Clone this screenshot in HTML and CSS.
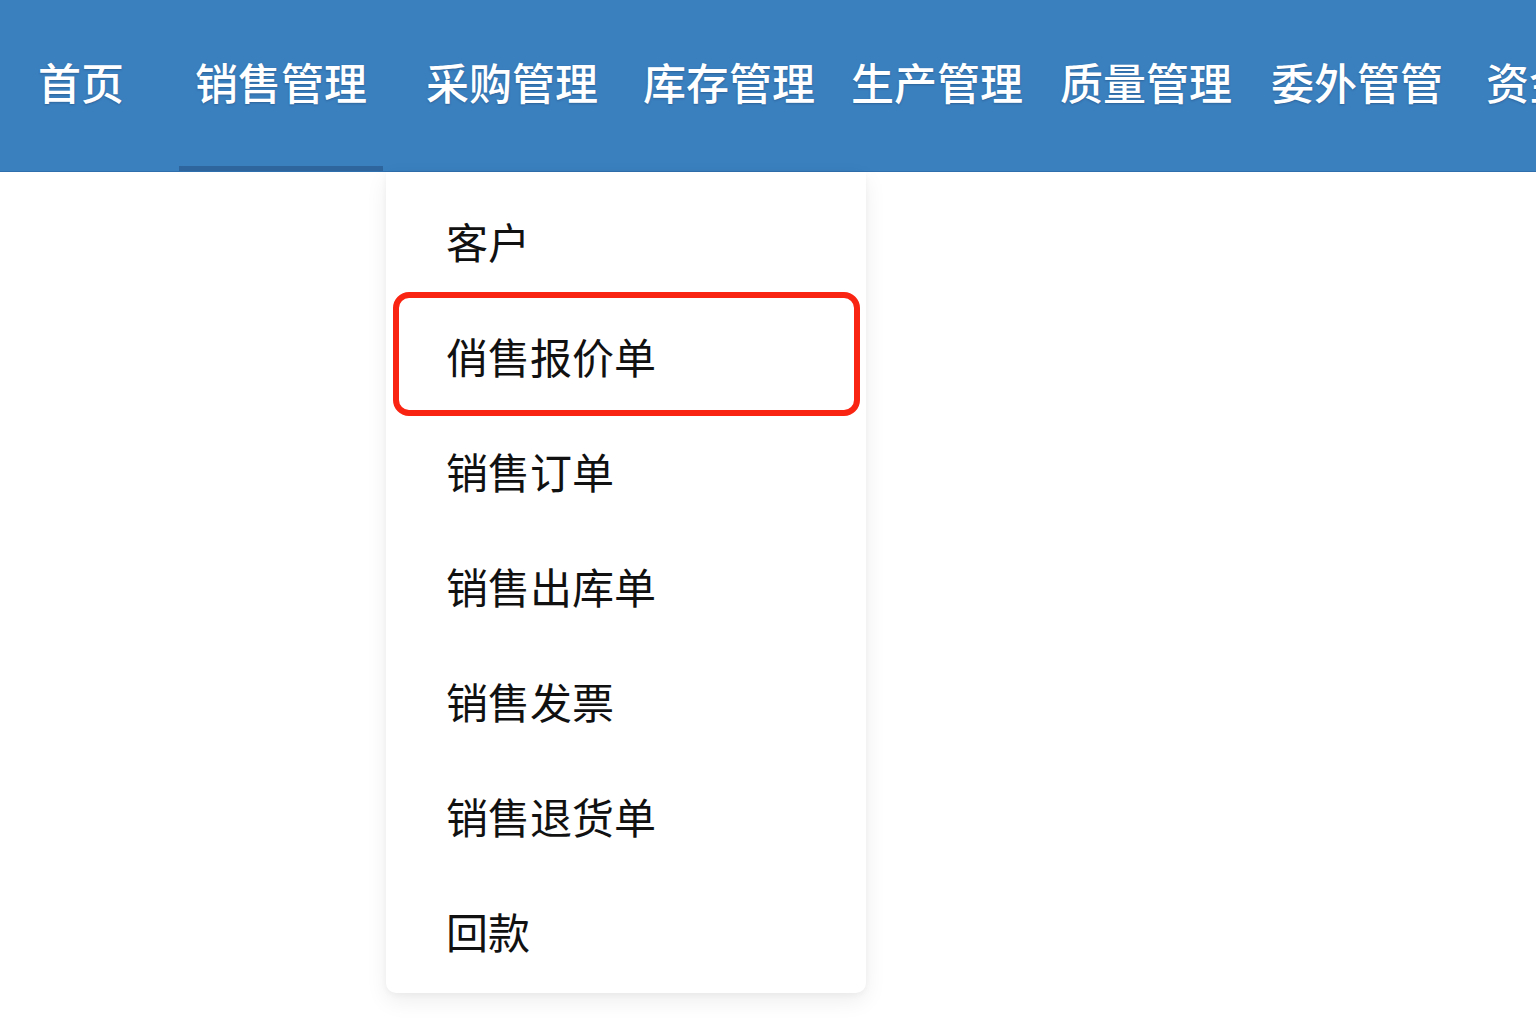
FILE: index.html
```html
<!DOCTYPE html>
<html lang="zh-CN">
<head>
<meta charset="utf-8">
<title>销售管理</title>
<link rel="stylesheet" href="styles.css">
</head>
<body>
<header class="topbar">
  <nav class="nav">
    <a class="nav-item">首页</a>
    <a class="nav-item active">销售管理</a>
    <a class="nav-item">采购管理</a>
    <a class="nav-item">库存管理</a>
    <a class="nav-item">生产管理</a>
    <a class="nav-item">质量管理</a>
    <a class="nav-item">委外管管</a>
    <a class="nav-item">资金管理</a>
  </nav>
</header>
<ul class="dropdown">
  <li class="menu-item">客户</li>
  <li class="menu-item highlighted">俏售报价单</li>
  <li class="menu-item">销售订单</li>
  <li class="menu-item">销售出库单</li>
  <li class="menu-item">销售发票</li>
  <li class="menu-item">销售退货单</li>
  <li class="menu-item">回款</li>
</ul>
</body>
</html>
```
FILE: styles.css
```css
html, body {
  margin: 0;
  padding: 0;
  background: #ffffff;
  width: 1536px;
  height: 1024px;
  overflow: hidden;
  font-family: "Noto Sans CJK SC", "Noto Sans", sans-serif;
}

.topbar {
  height: 171px;
  background: #3a7fbe;
  border-bottom: 1px solid #2f6fae;
  overflow: hidden;
}

.nav {
  display: flex;
  align-items: stretch;
  height: 171px;
  padding-left: 22px;
  white-space: nowrap;
}

.nav-item {
  display: block;
  box-sizing: border-box;
  height: 171px;
  padding: 56px 16px 0;
  font-size: 43px;
  line-height: 50px;
  font-weight: 500;
  color: #ffffff;
  text-shadow: 0 1px 2px rgba(20, 50, 90, 0.35);
  border-bottom: 5px solid transparent;
  flex-shrink: 0;
}

.nav-item:nth-child(2) { margin-left: 39px; }
.nav-item:nth-child(3) { margin-left: 27px; }
.nav-item:nth-child(4) { margin-left: 13px; }
.nav-item:nth-child(5) { margin-left: 4px; }
.nav-item:nth-child(6) { margin-left: 5px; }
.nav-item:nth-child(7) { margin-left: 7px; }
.nav-item:nth-child(8) { margin-left: 11px; }

.nav-item.active {
  border-bottom-color: #2d659c;
}

.dropdown {
  position: absolute;
  left: 386px;
  top: 172px;
  width: 480px;
  margin: 0;
  padding: 11px 0 5px;
  list-style: none;
  background: #ffffff;
  border-radius: 0 0 10px 10px;
  box-shadow: 0 8px 22px rgba(0, 0, 0, 0.07), 0 2px 6px rgba(0, 0, 0, 0.04);
}

.menu-item {
  position: relative;
  height: 115px;
  padding-left: 60px;
  font-size: 42px;
  line-height: 115px;
  color: #111111;
}

.menu-item.highlighted::after {
  content: "";
  position: absolute;
  left: 7px;
  right: 6px;
  top: -6px;
  bottom: -3px;
  border: 6px solid #fa2412;
  border-radius: 16px;
  pointer-events: none;
}
```
